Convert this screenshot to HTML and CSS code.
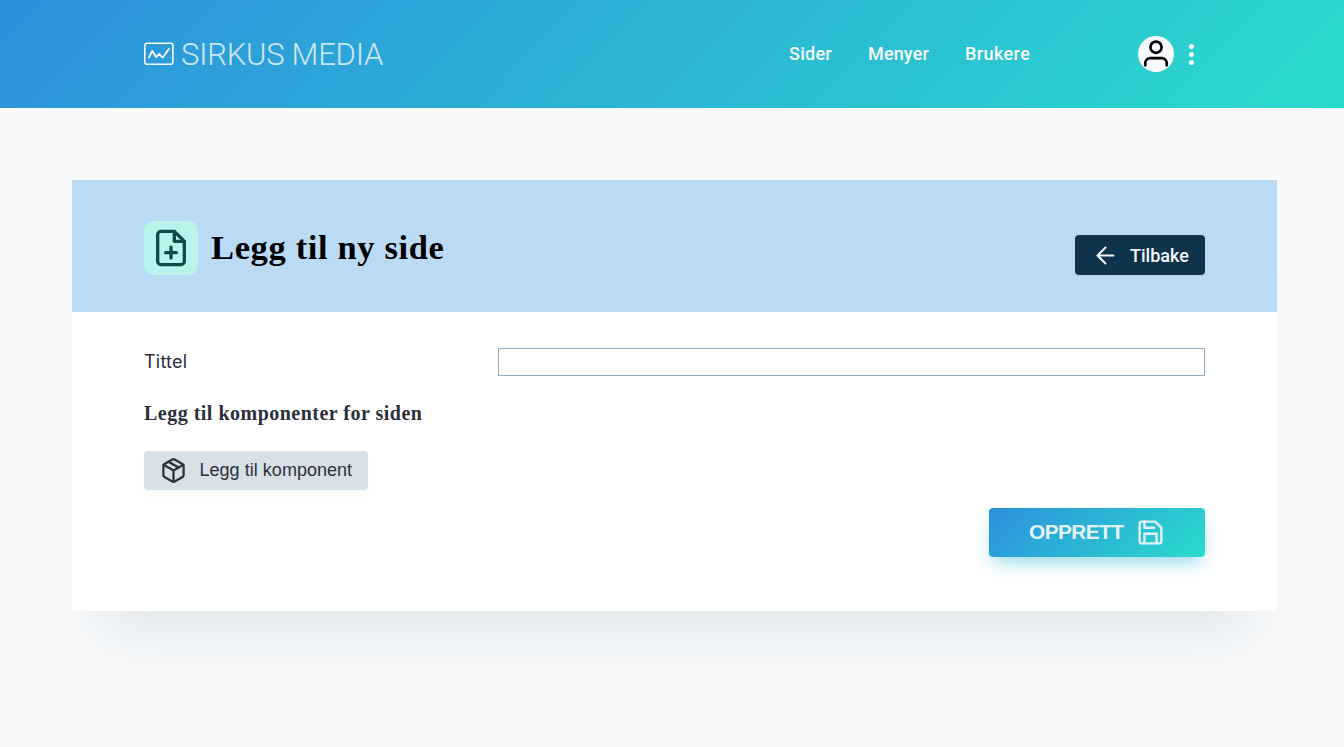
FILE: index.html
```html
<!DOCTYPE html>
<html lang="no">
<head>
<meta charset="utf-8">
<title>Sirkus Media</title>
<link rel="stylesheet" href="styles.css">
</head>
<body>
<header class="topbar">
  <a class="brand">
    <svg class="brand-mark" viewBox="0 0 30 24" fill="none" stroke="currentColor" stroke-linejoin="round" stroke-linecap="round"><rect x=".8" y="1.2" width="28.1" height="21" rx="2.3" stroke-width="1.6"/><path d="M4.800 15.500 8.300 9l4 6.200 2.700-3.200 3.800 3.600 6.200-8.800" stroke-width="1.8"/></svg>
    <span class="brand-name">SIRKUS MEDIA</span>
  </a>
  <nav class="nav">
    <a class="nav-sider">Sider</a>
    <a class="nav-menyer">Menyer</a>
    <a class="nav-brukere">Brukere</a>
  </nav>
  <div class="account">
    <span class="avatar"><svg viewBox="0 0 36 36" fill="none" stroke="#000" stroke-width="2.7" stroke-linecap="round"><circle cx="18" cy="11.2" r="5.6"/><path d="M7.300 29.300v-2.100a5 5 0 0 1 5-5h11.400a5 5 0 0 1 5 5v2.100"/></svg></span>
    <svg class="dots" viewBox="0 0 6 24" fill="currentColor"><circle cx="3.500" cy="4.500" r="2.500"/><circle cx="3.500" cy="12.500" r="2.500"/><circle cx="3.500" cy="20.500" r="2.500"/></svg>
  </div>
</header>
<main class="card">
  <div class="card-head">
    <span class="page-icon"><svg viewBox="0 0 24 24" fill="none" stroke="currentColor" stroke-width="2" stroke-linecap="round" stroke-linejoin="round"><path d="M14 2H6a2 2 0 0 0-2 2v16a2 2 0 0 0 2 2h12a2 2 0 0 0 2-2V8z"/><path d="M14 2v6h6M12 11.500v6.500M8.800 14.800h6.400"/></svg></span>
    <h1 class="title">Legg til ny side</h1>
    <a class="back"><svg viewBox="0 0 24 24" fill="none" stroke="currentColor" stroke-width="2" stroke-linecap="round" stroke-linejoin="round"><path d="M20.500 12.500h-16M12.500 4.500l-8 8 8 8"/></svg><span>Tilbake</span></a>
  </div>
  <form class="card-body">
    <div class="field">
      <label class="label" for="title">Tittel</label>
      <input class="input" id="title" type="text">
    </div>
    <h2 class="subtitle">Legg til komponenter for siden</h2>
    <button class="add" type="button"><svg viewBox="0 0 24 24" fill="none" stroke="currentColor" stroke-width="2" stroke-linecap="round" stroke-linejoin="round"><path d="M21 16V8a2 2 0 0 0-1-1.730l-7-4a2 2 0 0 0-2 0l-7 4A2 2 0 0 0 3 8v8a2 2 0 0 0 1 1.730l7 4a2 2 0 0 0 2 0l7-4A2 2 0 0 0 21 16z"/><path d="M3.270 6.960 12 12.010l8.730-5.050M12 22.080V12M7.500 4.210l9 5.190"/></svg><span>Legg til komponent</span></button>
    <button class="submit" type="button"><span>OPPRETT</span><svg viewBox="0 0 24 24" fill="none" stroke="currentColor" stroke-width="2" stroke-linecap="round" stroke-linejoin="round"><path d="M19 21H5a2 2 0 0 1-2-2V5a2 2 0 0 1 2-2h11l5 5v11a2 2 0 0 1-2 2z"/><path d="M17 21v-8H7v8M7 3v5h8"/></svg></button>
  </form>
</main>
</body>
</html>
```
FILE: styles.css
```css
* { box-sizing: border-box; }
body {
  margin: 0;
  min-height: 747px;
  background: #f7f9fb;
  color: #2b303b;
  font: 18px/27px "Liberation Sans", Arial, sans-serif;
}
svg { display: block; flex: none; }
.topbar {
  height: 108px;
  padding: 0 144px;
  display: flex;
  align-items: center;
  color: #f7f9fc;
  background: linear-gradient(135deg, #2c90dc, #2adbcc);
}
.brand { display: flex; align-items: center; width: 645px; }
.brand-mark { width: 30px; height: 24px; }
.brand-name {
  margin: 2px 0 0 7px;
  font: 300 31px/40px Roboto, sans-serif;
  letter-spacing: -0.23px;
  opacity: .8;
  white-space: nowrap;
}
.nav { display: flex; width: 349px; margin-top: -2px; font: 500 18px/27px Roboto, sans-serif; }
.nav-sider { width: 79px; letter-spacing: .25px; }
.nav-menyer { width: 97px; letter-spacing: .15px; }
.nav-brukere { letter-spacing: .4px; }
.account { display: flex; align-items: center; }
.avatar { width: 36px; height: 36px; border-radius: 50%; background: #f7f9fc; }
.dots { width: 6px; height: 24px; margin-left: 14px; }
.card {
  width: 1205px;
  height: 431px;
  margin: 72px 0 0 72px;
  background: #fff;
  box-shadow: 0 50px 54px -32px rgba(20, 55, 60, .1);
}
.card-head {
  height: 132px;
  padding: 0 72px;
  display: flex;
  align-items: center;
  background: #bbdbf4;
}
.page-icon {
  width: 54px;
  height: 54px;
  margin-top: 4px;
  padding: 7px;
  border-radius: 9px;
  background: #b9f3ec;
  color: #0d4a48;
}
.page-icon svg { width: 40px; height: 40px; }
.title {
  margin: 2px auto 0 13px;
  color: #000;
  font: bold 34.5px/45px "Liberation Serif", serif;
  letter-spacing: .64px;
}
.back {
  width: 130px;
  height: 40px;
  margin-top: 18px;
  padding-left: 18px;
  display: flex;
  align-items: center;
  gap: 13px;
  border-radius: 4px;
  background: #0f334d;
  color: #f7f9fc;
  font: 500 18px/27px Roboto, sans-serif;
}
.back svg { width: 24px; height: 24px; }
.card-body { padding: 36px 72px 0; display: flex; flex-direction: column; }
.field { display: flex; }
.label { width: 354px; font-family: Inter, sans-serif; letter-spacing: .2px; }
.input { width: 707px; height: 28px; border: 1px solid #91acc5; background: #fff; outline: 0; }
.subtitle {
  margin: 23px 0 0;
  font: bold 20px/28px "Liberation Serif", serif;
  letter-spacing: .49px;
}
button { border: 0; border-radius: 4px; display: flex; align-items: center; font-family: inherit; }
.add {
  width: 224px;
  height: 39px;
  margin-top: 24px;
  padding: 0 0 0 16px;
  gap: 12.5px;
  color: #2b303b;
  background: #d8e0e8;
  font-size: 18px;
  letter-spacing: .03px;
  white-space: nowrap;
  box-shadow: 0 5px 15px rgba(30, 50, 70, .03);
}
.add svg { width: 27px; height: 27px; }
.submit {
  align-self: flex-end;
  width: 216px;
  height: 49px;
  margin-top: 18px;
  padding: 0 0 1px 40px;
  gap: 12.5px;
  color: #e2f4fb;
  background: linear-gradient(135deg, #2c90dc, #2adbcc);
  font-size: 20.8px;
  letter-spacing: -.55px;
  font-weight: bold;
  box-shadow: 0 9px 18px -4px rgba(42, 181, 212, .5);
}
.submit svg { width: 29px; height: 29px; }
```
